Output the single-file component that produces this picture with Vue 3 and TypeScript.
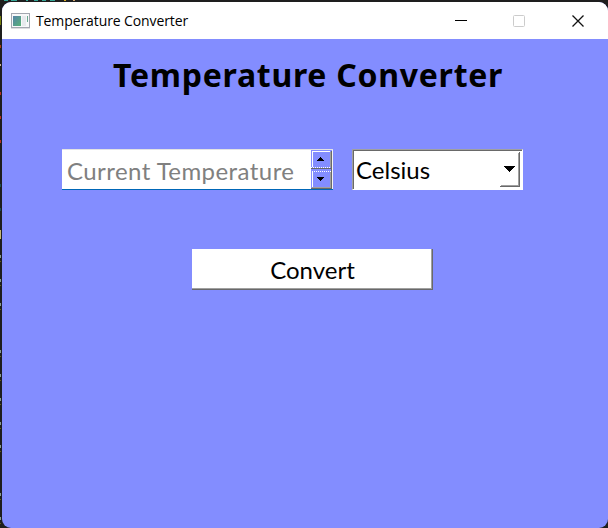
<script setup lang="ts">
import { ref } from 'vue'

interface Fleck {
  y: number
  h: number
  color: string
}
interface Dash {
  x: number
  w: number
  color: string
}

const temperature = ref('')
const unit = ref('Celsius')

const leftFlecks: Fleck[] = [
  { y: 16, h: 9, color: '#77800c' },
  { y: 45, h: 3, color: '#a83c18' },
  { y: 64, h: 2, color: '#c9b298' },
  { y: 92, h: 3, color: '#b83222' },
  { y: 116, h: 3, color: '#b83222' },
  { y: 140, h: 3, color: '#b83222' },
  { y: 184, h: 3, color: '#1d5150' },
  { y: 208, h: 3, color: '#1d4c56' },
  { y: 230, h: 9, color: '#c4b773' },
  { y: 255, h: 3, color: '#879c94' },
  { y: 261, h: 1, color: '#63601c' },
  ...[279, 303, 350, 374, 398, 422, 445, 493, 517].flatMap((y) => [
    { y, h: 3, color: '#879c94' },
    { y: y + 6, h: 1, color: '#63601c' },
  ]),
]

const topDashes: Dash[] = [
  { x: 4, w: 4, color: '#35a596' },
  { x: 11, w: 6, color: '#35a596' },
  { x: 26, w: 2, color: '#35a596' },
  { x: 34, w: 4, color: '#35a596' },
  { x: 42, w: 4, color: '#35a596' },
  { x: 50, w: 5, color: '#35a596' },
  { x: 64, w: 2, color: '#d8ad22' },
  { x: 73, w: 2, color: '#cfa66f' },
]
</script>

<template>
  <div class="desktop">
    <svg class="backdrop" width="608" height="528" aria-hidden="true" shape-rendering="crispEdges">
      <rect v-for="(f, i) in leftFlecks" :key="'l' + i" x="0" :y="f.y" width="1" :height="f.h" :fill="f.color" />
      <rect v-for="(d, i) in topDashes" :key="'t' + i" :x="d.x" y="0" :width="d.w" height="1" :fill="d.color" />
    </svg>
    <main class="window">
      <header class="titlebar">
        <svg class="app-icon" width="19" height="16" viewBox="0 0 19 16">
          <defs>
            <linearGradient id="pane" x1="0" y1="0" x2="1" y2="1">
              <stop offset="0" stop-color="#5683a8" />
              <stop offset="1" stop-color="#58b277" />
            </linearGradient>
          </defs>
          <rect x="0" y="15" width="19" height="1" fill="#dedee0" />
          <rect x=".5" y=".5" width="18" height="14" fill="#f7f8f9" stroke="#a3a7b0" />
          <rect x="2" y="3" width="8" height="10" fill="url(#pane)" />
          <rect x="11" y="3" width="4" height="10" fill="#e7eaed" />
          <rect x="16" y="3" width="1" height="6" fill="#6ba991" />
        </svg>
        <span class="caption">Temperature Converter</span>
        <div class="controls">
          <svg width="12" height="12" shape-rendering="crispEdges"><rect y="5" width="12" height="1" fill="#000" /></svg>
          <svg width="12" height="12"><rect x=".5" y=".5" width="11" height="11" rx="1" fill="none" stroke="#cccccc" /></svg>
          <svg class="close" width="12" height="12"><path d="M.5.5l11 11M11.5.5l-11 11" fill="none" stroke="#111" stroke-width="1.3" /></svg>
        </div>
      </header>
      <section class="content">
        <h1>Temperature Converter</h1>
        <div class="fields">
          <div class="spinbox">
            <span class="placeholder">{{ temperature || 'Current Temperature' }}</span>
            <svg class="spinner" width="22" height="39" shape-rendering="crispEdges">
              <rect width="22" height="39" fill="#838dff" />
              <path d="M1 1H19V2H2V17H1Z" fill="#fff" />
              <path d="M0 17.5H21" stroke="#fff" stroke-dasharray="1 1" />
              <path d="M1 21.5H21" stroke="#fff" stroke-dasharray="1 1" />
              <path d="M1 22H2V37H1Z" fill="#fff" />
              <path d="M0 18H21V19H0ZM20 1H21V39H20ZM0 38H21V39H0Z" fill="#696969" />
              <path d="M19 2H20V17H19ZM19 22H20V37H19ZM1 37H20V38H1Z" fill="#a0a0a0" />
              <path d="M21 0H22V39H21Z" fill="#f4f4f4" />
              <path d="M9 7h1v1h1v1h1v1h1v1H6v-1h1V9h1V8h1z" fill="#000" />
              <path d="M6 27h7v1h-1v1h-1v1h-1v1H9v-1H8v-1H7v-1H6z" fill="#000" />
            </svg>
          </div>
          <div class="combobox">
            <span class="value">{{ unit }}</span>
            <svg class="drop" width="21" height="37" shape-rendering="crispEdges">
              <path d="M19 1H20V36H0V35H19Z" fill="#696969" />
              <path d="M18 2H19V35H1V34H18Z" fill="#a0a0a0" />
              <path d="M4 15h11v1h-1v1h-1v1h-1v1h-1v1h-1v1H9v-1H8v-1H7v-1H6v-1H5v-1H4z" fill="#000" />
            </svg>
          </div>
        </div>
        <button class="convert" type="button">Convert</button>
      </section>
    </main>
  </div>
</template>

<style>
body {
  margin: 0;
  overflow: hidden;
}
</style>

<style scoped>
.desktop {
  position: relative;
  box-sizing: border-box;
  width: 608px;
  height: 528px;
  padding: 2px 0 0 2px;
  background: #1e1e1e;
}
.backdrop {
  position: absolute;
  inset: 0;
}
.window {
  position: relative;
  height: 526px;
  border-radius: 9px;
  overflow: hidden;
  background: #838dff;
  color: #000;
}
.titlebar {
  display: flex;
  align-items: center;
  box-sizing: border-box;
  height: 37px;
  padding: 0 24px 0 9px;
  background: #fff;
}
.app-icon {
  flex: none;
}
.caption {
  margin-left: 6px;
  font: 14px/20px 'Open Sans', sans-serif;
  letter-spacing: -0.1px;
  white-space: nowrap;
}
.controls {
  display: flex;
  gap: 46px;
  margin-left: auto;
}
.close {
  margin-left: 1px;
}
.content {
  display: flex;
  flex-direction: column;
}
h1 {
  margin: 16px 0 0 111px;
  font: bold 32px/40px 'Noto Sans', sans-serif;
  letter-spacing: 0.73px;
  white-space: nowrap;
}
.fields {
  display: flex;
  gap: 19px;
  margin: 54px 0 0 60px;
  font: 24px/40px Lato, sans-serif;
  white-space: nowrap;
}
.spinbox,
.combobox {
  display: flex;
  justify-content: space-between;
  box-sizing: border-box;
  height: 41px;
  background: #fff;
}
.spinbox {
  width: 271px;
  padding: 1px 0 0 5px;
  border-top: 1px solid #e3e3e3;
  border-bottom: 1px solid #0067b8;
}
.spinner {
  margin-top: -1px;
}
.placeholder {
  color: #808080;
  line-height: 40px;
  letter-spacing: 0.44px;
}
.combobox {
  width: 171px;
  padding: 1px 1px 1px 3px;
  border: 1px solid;
  border-color: #a0a0a0 #fff #fff #a0a0a0;
  box-shadow: inset 1px 1px #696969;
}
.value {
  line-height: 38px;
}
.convert {
  width: 241px;
  height: 41px;
  margin: 59px 0 0 190px;
  padding: 0;
  border: 0;
  background: #fff;
  box-shadow: inset -1px -1px #696969, inset -2px -2px #a0a0a0;
  color: #000;
  font: 24px/41px Lato, sans-serif;
}
</style>
